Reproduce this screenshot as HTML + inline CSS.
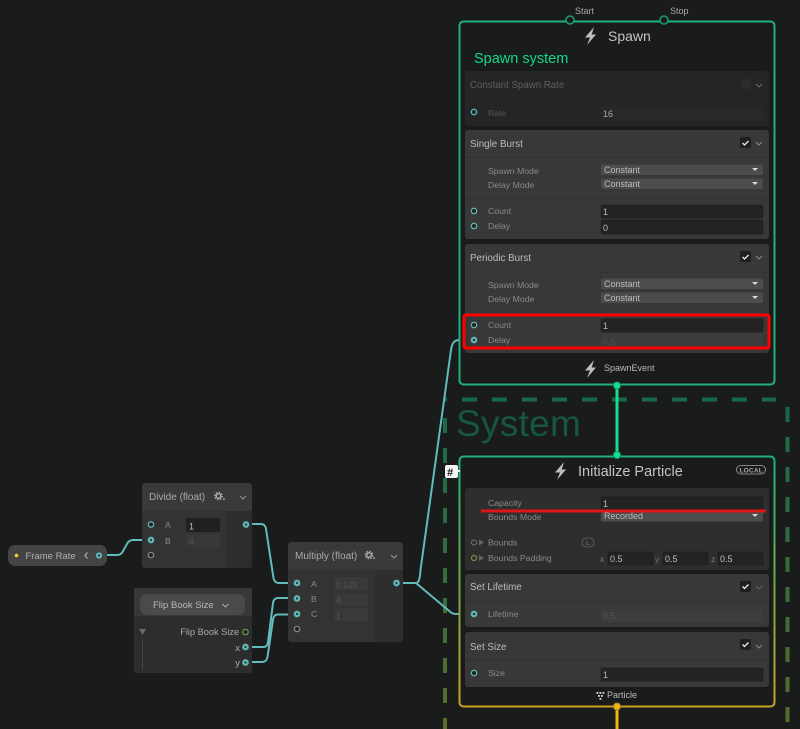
<!DOCTYPE html>
<html><head><meta charset="utf-8"><style>
html,body{margin:0;padding:0;background:#1a1b1b;width:800px;height:729px;overflow:hidden}
svg{display:block;filter:blur(.3px)}
text{font-family:"Liberation Sans",sans-serif;font-size:8.7px;fill:#8a8a8a}
.v{fill:#bdbdbd;font-size:9px}
.h{fill:#bcbcbc;font-size:9.8px}
.f{fill:#232323;stroke:#1b1b1b;stroke-width:.5}
.dd{fill:#4c4c4c}
.p{fill:#1f2424;stroke:#5fb5b3;stroke-width:1.3}
.pc{fill:#5fb5b3;stroke:#5fb5b3;stroke-width:1.3}
.w{fill:none;stroke:#62bcbb;stroke-width:2}
.sep{stroke:#2f2f2f;stroke-width:1}
</style></head><body>
<svg width="800" height="729" viewBox="0 0 800 729" xmlns="http://www.w3.org/2000/svg">
<defs>
<linearGradient id="g" x1="0" y1="456" x2="0" y2="706" gradientUnits="userSpaceOnUse"><stop offset="0" stop-color="#1eb37c"/><stop offset=".5" stop-color="#6fa84c"/><stop offset="1" stop-color="#c9a224"/></linearGradient>
<linearGradient id="gd" x1="0" y1="400" x2="0" y2="729" gradientUnits="userSpaceOnUse"><stop offset="0" stop-color="#17694a"/><stop offset=".6" stop-color="#3a6d3b"/><stop offset="1" stop-color="#5a6d2a"/></linearGradient>
<path id="bolt" d="M9 0L0 10.500H5L2 18L11 7.500H6.700L9 0Z" fill="#bdbdbd"/>
<g id="gear"><circle r="2.300" fill="none" stroke="#a8a8a8" stroke-width="1.500"/><circle r="3.700" fill="none" stroke="#a8a8a8" stroke-width="1.400" stroke-dasharray="1.600 1.300"/></g>
</defs>

<!-- system dashes -->
<path d="M445 399.500H447M462 399.500H776" stroke="#17694a" stroke-width="4" stroke-dasharray="15 15" fill="none"/>
<path d="M787.500 407V729" stroke="url(#gd)" stroke-width="4" stroke-dasharray="15 15" fill="none"/>
<path d="M445 418V729" stroke="url(#gd)" stroke-width="4" stroke-dasharray="15 15" fill="none"/>
<text x="456" y="436" style="font-size:37px;letter-spacing:.3px;fill:#17563f">System</text>

<!-- wires -->
<path class="w" d="M103 555H117C120 555 121 554 122.500 552L127.500 543C129 541 130.500 540 133 540H150"/>
<path class="w" d="M248 524H261C264 524 265.500 526 266 529L273.500 578C274 581 276 583 279 583H296"/>
<path class="w" d="M248 647H264C266.500 647 267.500 645 268 642L273 603C273.500 600 275 598 278 598H296"/>
<path class="w" d="M248 662H262C265 662 267 660 267.500 657L273 620C273.500 616 275 614.500 278 614.500H296"/>
<path class="w" d="M397 583H416C419 583 420 578 420.500 570L451 350C452 343 454 340 460 340" stroke-width="1.700"/>
<path class="w" d="M416 583L451 612.500C453 614 455 614 460 614" stroke-width="1.700"/>

<!-- flow links -->
<path d="M617 386V455" stroke="#16e08f" stroke-width="3"/>
<path d="M617 707V729" stroke="#f2b512" stroke-width="3"/>

<!-- Spawn context -->
<rect x="459.500" y="21.500" width="315" height="363" rx="4" fill="#1a1b1b" stroke="#1eb37c" stroke-width="2"/>
<circle cx="570" cy="20" r="4" fill="#1a1b1b" stroke="#1a9e6f" stroke-width="1.500"/>
<circle cx="664" cy="20" r="4" fill="#1a1b1b" stroke="#1a9e6f" stroke-width="1.500"/>
<text x="575" y="14" style="font-size:9px;fill:#a8a8a8">Start</text>
<text x="670" y="14" style="font-size:9px;fill:#a8a8a8">Stop</text>
<use href="#bolt" x="585" y="27"/>
<text x="608" y="41" style="font-size:14px;fill:#c4c4c4">Spawn</text>
<text x="474" y="63" style="font-size:14.500px;fill:#12d98a">Spawn system</text>

<!-- Constant Spawn Rate -->
<rect x="465" y="71" width="304" height="55" rx="3" fill="#252525"/>
<text x="470" y="88" style="font-size:9.700px;fill:#5f5f5f">Constant Spawn Rate</text>
<rect x="741" y="79" width="10" height="10" rx="1.500" fill="#2c2c2c"/>
<path d="M756 84l3 3 3-3" fill="none" stroke="#6a6a6a" stroke-width="1"/>
<circle class="p" cx="474" cy="112" r="2.700"/>
<text x="488" y="116" style="fill:#555">Rate</text>
<rect x="601" y="107" width="162" height="14" fill="#282828"/>
<text x="603" y="117" class="v" style="fill:#a8a8a8">16</text>

<!-- Single Burst -->
<rect x="465" y="130" width="304" height="109" rx="3" fill="#383838"/>
<text x="470" y="147" class="h">Single Burst</text>
<rect x="740" y="137" width="11" height="11" rx="1.500" fill="#1f1f1f"/>
<path d="M742.500 143l2 2 4-4" fill="none" stroke="#eee" stroke-width="1.300"/>
<path d="M756 142l3 3 3-3" fill="none" stroke="#8a8a8a" stroke-width="1"/>
<line class="sep" x1="465" x2="769" y1="157" y2="157"/>
<text x="488" y="174">Spawn Mode</text>
<text x="488" y="188">Delay Mode</text>
<rect class="dd" x="601" y="164.500" width="162" height="10.500" rx="1.500"/>
<rect class="dd" x="601" y="178.500" width="162" height="10.500" rx="1.500"/>
<text x="604" y="173" class="v">Constant</text>
<text x="604" y="187" class="v">Constant</text>
<path d="M752 168h6l-3 3z" fill="#d8d8d8"/><path d="M752 182h6l-3 3z" fill="#d8d8d8"/>
<line class="sep" x1="465" x2="769" y1="198" y2="198"/>
<circle class="p" cx="474" cy="211" r="2.700"/>
<circle class="p" cx="474" cy="226" r="2.700"/>
<text x="488" y="214">Count</text>
<text x="488" y="229">Delay</text>
<rect class="f" x="601" y="205" width="162" height="13" rx="1"/>
<rect class="f" x="601" y="220" width="162" height="14" rx="1"/>
<text x="603" y="215" class="v">1</text>
<text x="603" y="231" class="v">0</text>

<!-- Periodic Burst -->
<rect x="465" y="244" width="304" height="109" rx="3" fill="#383838"/>
<text x="470" y="261" class="h">Periodic Burst</text>
<rect x="740" y="251" width="11" height="11" rx="1.500" fill="#1f1f1f"/>
<path d="M742.500 257l2 2 4-4" fill="none" stroke="#eee" stroke-width="1.300"/>
<path d="M756 256l3 3 3-3" fill="none" stroke="#8a8a8a" stroke-width="1"/>
<line class="sep" x1="465" x2="769" y1="272" y2="272"/>
<text x="488" y="288">Spawn Mode</text>
<text x="488" y="302">Delay Mode</text>
<rect class="dd" x="601" y="278.500" width="162" height="10.500" rx="1.500"/>
<rect class="dd" x="601" y="292.500" width="162" height="10.500" rx="1.500"/>
<text x="604" y="287" class="v">Constant</text>
<text x="604" y="301" class="v">Constant</text>
<path d="M752 282h6l-3 3z" fill="#d8d8d8"/><path d="M752 296h6l-3 3z" fill="#d8d8d8"/>
<circle class="p" cx="474" cy="325" r="2.700"/>
<circle class="pc" cx="474" cy="340" r="2.700"/>
<circle cx="474" cy="340" r="1.100" fill="#222"/>
<text x="488" y="328">Count</text>
<text x="488" y="343">Delay</text>
<rect class="f" x="601" y="319" width="162" height="13" rx="1"/>
<rect x="601" y="334" width="162" height="14" fill="#3c3c3c"/>
<text x="603" y="329" class="v">1</text>
<text x="603" y="345" class="v" style="fill:#4e4e4e">0.5</text>
<rect x="464" y="315" width="305" height="33" rx="1.500" fill="none" stroke="#ff0000" stroke-width="3"/>

<use href="#bolt" x="585" y="360"/>
<text x="604" y="371" style="font-size:9px;fill:#bbb">SpawnEvent</text>
<circle cx="617" cy="385.500" r="3.500" fill="#16e08f" stroke="#149a68" stroke-width="1"/>

<!-- Init context -->
<rect x="459.500" y="456.500" width="315" height="250" rx="4" fill="#1a1b1b" stroke="url(#g)" stroke-width="2"/>
<circle cx="617" cy="455" r="3.500" fill="#16e08f" stroke="#149a68" stroke-width="1"/>
<use href="#bolt" x="555" y="462"/>
<text x="578" y="476" style="font-size:14.500px;fill:#c4c4c4">Initialize Particle</text>
<rect x="736.500" y="465.500" width="29" height="8.500" rx="4.200" fill="none" stroke="#aaa" stroke-width=".8"/>
<text x="739.500" y="472.500" style="font-size:6.500px;font-weight:bold;letter-spacing:.2px;fill:#aaa">LOCAL</text>
<rect x="445" y="465" width="13" height="13" rx="2" fill="#f4f4f4"/>
<path d="M458 471l2 0" stroke="#f4f4f4" stroke-width="2"/>
<text x="447" y="476" style="font-size:11px;font-weight:bold;fill:#111">#</text>

<rect x="465" y="488" width="304" height="82" rx="3" fill="#2e2e2e"/>
<text x="488" y="506">Capacity</text>
<text x="488" y="520">Bounds Mode</text>
<rect class="f" x="601" y="497" width="162" height="13"/>
<rect class="dd" x="601" y="511" width="162" height="10.500" rx="1.500"/>
<text x="603" y="507" class="v">1</text>
<text x="604" y="519" class="v">Recorded</text>
<path d="M752 514h6l-3 3z" fill="#d8d8d8"/>
<path d="M481 511H766" stroke="#e01515" stroke-width="3"/>
<line class="sep" x1="465" x2="769" y1="529.500" y2="529.500"/>
<circle cx="474" cy="542.500" r="2.500" fill="none" stroke="#777" stroke-width="1"/>
<path d="M479 539.500l5 3-5 3z" fill="#666"/>
<text x="488" y="545.500">Bounds</text>
<rect x="582" y="538" width="12" height="9" rx="4.500" fill="none" stroke="#666" stroke-width=".8"/>
<text x="586" y="545" style="font-size:6.500px;fill:#888">L</text>
<circle cx="474" cy="558" r="2.500" fill="none" stroke="#a09a40" stroke-width="1"/>
<path d="M479 555l5 3-5 3z" fill="#666"/>
<text x="488" y="561">Bounds Padding</text>
<text x="600" y="562" style="fill:#777">x</text><text x="655" y="562" style="fill:#777">y</text><text x="711" y="562" style="fill:#777">z</text>
<rect class="f" x="608" y="552" width="45" height="13"/>
<rect class="f" x="663" y="552" width="45" height="13"/>
<rect class="f" x="718" y="552" width="45" height="13"/>
<text x="610" y="562" class="v">0.5</text><text x="665" y="562" class="v">0.5</text><text x="720" y="562" class="v">0.5</text>

<rect x="465" y="574" width="304" height="53" rx="3" fill="#383838"/>
<text x="470" y="590" class="h">Set Lifetime</text>
<rect x="740" y="581" width="11" height="11" rx="1.500" fill="#1f1f1f"/>
<path d="M742.500 586.500l2 2 4-4" fill="none" stroke="#eee" stroke-width="1.300"/>
<path d="M756 586l3 3 3-3" fill="none" stroke="#666" stroke-width="1"/>
<line class="sep" x1="465" x2="769" y1="601" y2="601"/>
<circle class="pc" cx="474" cy="614" r="2.700"/><circle cx="474" cy="614" r="1.100" fill="#222"/>
<text x="488" y="617">Lifetime</text>
<rect x="601" y="609" width="162" height="13" fill="#3d3d3d"/>
<text x="603" y="619" class="v" style="fill:#555">0.5</text>

<rect x="465" y="632" width="304" height="55" rx="3" fill="#383838"/>
<text x="470" y="650" class="h">Set Size</text>
<rect x="740" y="639" width="11" height="11" rx="1.500" fill="#1f1f1f"/>
<path d="M742.500 644.500l2 2 4-4" fill="none" stroke="#eee" stroke-width="1.300"/>
<path d="M756 645l3 3 3-3" fill="none" stroke="#8a8a8a" stroke-width="1"/>
<line class="sep" x1="465" x2="769" y1="660" y2="660"/>
<circle class="p" cx="474" cy="673" r="2.700"/>
<text x="488" y="676">Size</text>
<rect class="f" x="601" y="668" width="162" height="13"/>
<text x="603" y="678" class="v">1</text>
<g fill="#ddd"><rect x="596.500" y="692" width="1.800" height="1.800"/><rect x="599.500" y="692" width="1.800" height="1.800"/><rect x="602.500" y="692" width="1.800" height="1.800"/><rect x="598" y="695" width="1.800" height="1.800"/><rect x="601" y="695" width="1.800" height="1.800"/><rect x="599.500" y="698" width="1.800" height="1.800"/></g>
<text x="607" y="698" style="font-size:9px;fill:#bbb">Particle</text>
<circle cx="617" cy="706.500" r="3.500" fill="#f2b512" stroke="#a88a20" stroke-width="1"/>

<!-- Frame Rate -->
<rect x="8" y="545" width="99" height="21" rx="7" fill="#444"/>
<circle cx="16.500" cy="555.500" r="1.800" fill="#f1d22b"/>
<text x="25.500" y="559" style="font-size:9.500px;fill:#b0b0b0">Frame Rate</text>
<path d="M87.500 552.500l-2.500 3 2.500 3" fill="none" stroke="#bbb" stroke-width="1"/>
<circle class="pc" cx="99" cy="555.500" r="2.500"/><circle cx="99" cy="555.500" r="1" fill="#222"/>

<!-- Divide -->
<rect x="142" y="483" width="110" height="85" rx="3" fill="#393939"/>
<path d="M142 511H226.500V568H145a3 3 0 0 1-3-3Z" fill="#333"/>
<path d="M226.500 511H252V565a3 3 0 0 1-3 3H226.500Z" fill="#2d2d2d"/>
<text x="149" y="500" style="font-size:10px;fill:#aaa">Divide (float)</text>
<use href="#gear" x="218.500" y="496"/>
<path d="M222.500 498.500h3l-1.500 2z" fill="#a8a8a8"/>
<path d="M240 496l3 3 3-3" fill="none" stroke="#999" stroke-width="1"/>
<circle class="p" cx="151" cy="524.500" r="2.700"/>
<circle class="pc" cx="151" cy="540" r="2.700"/><circle cx="151" cy="540" r="1" fill="#222"/>
<circle cx="151" cy="555" r="2.700" fill="#222" stroke="#888" stroke-width="1.200"/>
<text x="165" y="528">A</text><text x="165" y="544">B</text>
<rect x="186" y="518" width="34" height="14" rx="2" fill="#202020"/>
<rect x="186" y="534" width="34" height="13" fill="#383838"/>
<text x="189" y="529.500" class="v">1</text>
<text x="189" y="544" style="fill:#525252">8</text>
<circle class="pc" cx="246" cy="524.500" r="2.700"/><circle cx="246" cy="524.500" r="1" fill="#222"/>

<!-- Flip Book Size -->
<rect x="134" y="588" width="118" height="85" rx="2" fill="#2d2d2d"/>
<rect x="134" y="588" width="118" height="28" rx="2" fill="#383838"/>
<rect x="140" y="594" width="105" height="21" rx="7" fill="#4a4a4a"/>
<text x="153" y="608" style="font-size:9.500px;fill:#b8b8b8">Flip Book Size</text>
<path d="M222.500 604l3 3 3-3" fill="none" stroke="#aaa" stroke-width="1"/>
<path d="M139 629h7l-3.500 6z" fill="#6a6a6a"/>
<line x1="142.500" y1="639" x2="142.500" y2="670" stroke="#444"/>
<text x="239" y="635" text-anchor="end" style="font-size:9.200px;fill:#aaa">Flip Book Size</text>
<text x="240" y="651" text-anchor="end" style="font-size:9.500px;fill:#aaa">x</text>
<text x="240" y="666" text-anchor="end" style="font-size:9.500px;fill:#aaa">y</text>
<circle cx="245.500" cy="632" r="2.700" fill="#222" stroke="#5fa34a" stroke-width="1.200"/>
<circle class="pc" cx="245.500" cy="647" r="2.700"/><circle cx="245.500" cy="647" r="1" fill="#222"/>
<circle class="pc" cx="245.500" cy="662.500" r="2.700"/><circle cx="245.500" cy="662.500" r="1" fill="#222"/>

<!-- Multiply -->
<rect x="288" y="542" width="115" height="100" rx="3" fill="#393939"/>
<path d="M288 570H375V642H291a3 3 0 0 1-3-3Z" fill="#333"/>
<path d="M375 570H403V639a3 3 0 0 1-3 3H375Z" fill="#2e2e2e"/>
<text x="295" y="559" style="font-size:10px;fill:#aaa">Multiply (float)</text>
<use href="#gear" x="369" y="555"/>
<path d="M372.500 557.500h3l-1.500 2z" fill="#a8a8a8"/>
<path d="M391 555l3 3 3-3" fill="none" stroke="#999" stroke-width="1"/>
<circle class="pc" cx="297" cy="583" r="2.700"/><circle cx="297" cy="583" r="1" fill="#222"/>
<circle class="pc" cx="297" cy="598.500" r="2.700"/><circle cx="297" cy="598.500" r="1" fill="#222"/>
<circle class="pc" cx="297" cy="614" r="2.700"/><circle cx="297" cy="614" r="1" fill="#222"/>
<circle cx="297" cy="629" r="2.700" fill="#222" stroke="#888" stroke-width="1.200"/>
<text x="311" y="587">A</text><text x="311" y="602">B</text><text x="311" y="617">C</text>
<rect x="334" y="577" width="34" height="13" fill="#393939"/>
<rect x="334" y="593" width="34" height="13" fill="#393939"/>
<rect x="334" y="608" width="34" height="13" fill="#393939"/>
<text x="336" y="588" style="fill:#505050">0.125</text>
<text x="336" y="603" style="fill:#505050">4</text>
<text x="336" y="619" style="fill:#505050">1</text>
<circle class="pc" cx="396.500" cy="583" r="2.700"/><circle cx="396.500" cy="583" r="1" fill="#222"/>
</svg>
</body></html>
